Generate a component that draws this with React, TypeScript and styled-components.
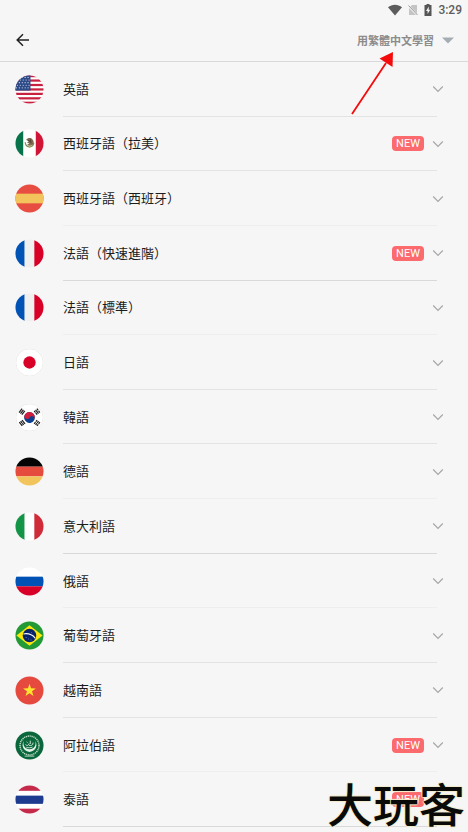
import React, { useState } from "react";
import styled, { createGlobalStyle } from "styled-components";

const GlobalStyle = createGlobalStyle`
  * { box-sizing: border-box; }
  body { margin: 0; background: #f6f6f6; }
  button, select { font: inherit; color: inherit; border: 0; padding: 0; margin: 0; background: none; }
`;

const Page = styled.div`
  position: relative;
  display: flex;
  flex-direction: column;
  min-height: 100vh;
  background: #f6f6f6;
  color: #1c1c1c;
  font-family: "Noto Sans CJK SC", "Noto Sans", sans-serif;
`;

const StatusBar = styled.div`
  display: flex;
  align-items: center;
  justify-content: flex-end;
  gap: 6px;
  height: 20px;
  padding-right: 6px;
  color: #5c5c5c;
  font: 500 12px/20px Roboto, sans-serif;
`;

const Header = styled.header`
  display: flex;
  align-items: center;
  justify-content: space-between;
  height: 42px;
  padding: 0 14px 1px 15px;
  border-bottom: 1px solid #d9d9dc;
`;

const BackButton = styled.button`
  display: flex;
  cursor: pointer;
`;

const LanguagePicker = styled.label`
  display: flex;
  align-items: center;
  gap: 8px;
`;

const LanguageSelect = styled.select`
  appearance: none;
  color: #8c8c8c;
  font-size: 11px;
  line-height: 16px;
  font-weight: 700;
  cursor: pointer;
`;

const List = styled.ul`
  flex: 1;
  display: grid;
  grid-auto-rows: 1fr;
  list-style: none;
  margin: 0;
  padding: 0 0 5px;
`;

const Item = styled.li`
  display: flex;
  min-height: 48px;
`;

const Row = styled.button`
  flex: 1;
  display: flex;
  padding: 0 31px 0 15px;
  text-align: left;
  cursor: pointer;
`;

const FlagCell = styled.span`
  display: flex;
  align-items: center;
  align-self: stretch;
  width: 48px;
`;

type Tone = "faint" | "soft" | "strong";
const tones: Record<Tone, string> = { faint: "#eeeeee", soft: "#e3e3e3", strong: "#d9d9d9" };

const RowBody = styled.span<{ $tone: Tone }>`
  flex: 1;
  align-self: stretch;
  display: flex;
  align-items: center;
  padding-top: 1px;
  border-bottom: 1px solid ${(p) => tones[p.$tone]};
`;

const Name = styled.span`
  flex: 1;
  padding-bottom: 1px;
  font-size: 13px;
  line-height: 20px;
`;

const Badge = styled.span`
  width: 32px;
  height: 15px;
  border-radius: 4px;
  background: #fb6a6c;
  color: #fff;
  font: 400 11px/16px Roboto, sans-serif;
  text-align: center;
`;

const Chevron = styled.svg<{ $open: boolean }>`
  width: 12px;
  height: 8px;
  margin: 0 -7px 0 8px;
  transform: ${(p) => (p.$open ? "rotate(180deg)" : "none")};
`;

const Pointer = styled.svg`
  position: absolute;
  top: 50px;
  right: 72px;
  pointer-events: none;
`;

const Watermark = styled.div`
  position: absolute;
  right: 3px;
  bottom: 4px;
  color: #0a0a08;
  font-size: 46px;
  line-height: 52px;
  font-weight: 500;
  text-shadow: 1px 0 1px #f3eccb, -1px 0 1px #f3eccb, 0 1px 1px #f3eccb, 0 -1px 1px #f3eccb;
  pointer-events: none;
`;

const star = (cx: number, cy: number, r: number) =>
  Array.from({ length: 10 }, (_, i) => {
    const a = (i * Math.PI) / 5 - Math.PI / 2;
    const q = i % 2 ? r * 0.39 : r;
    return `${cx + q * Math.cos(a)},${cy + q * Math.sin(a)}`;
  }).join(" ");

const Tricolor = ({ colors, vertical }: { colors: string[]; vertical?: boolean }) => (
  <>
    {colors.map((c, i) =>
      vertical ? (
        <rect key={i} x={i * 10} width="10" height="30" fill={c} />
      ) : (
        <rect key={i} y={i * 10} width="30" height="10" fill={c} />
      )
    )}
  </>
);

const Trigram = ({ x, y, angle, broken }: { x: number; y: number; angle: number; broken: number[] }) => (
  <g transform={`translate(${x} ${y}) rotate(${angle})`} stroke="#222" strokeWidth="1.3">
    {[-1.8, 0, 1.8].map((o, i) => (
      <path key={i} d={broken[i] ? `M-2.5 ${o}h2.2M.3 ${o}h2.2` : `M-2.5 ${o}h5`} />
    ))}
  </g>
);

const flags: Record<string, React.ReactNode> = {
  us: (
    <>
      <rect width="30" height="30" fill="#fff" />
      {[0, 4.6, 9.2, 13.8, 18.4, 23, 27.6].map((y) => (
        <rect key={y} y={y} width="30" height="2.3" fill="#c8203f" />
      ))}
      <rect width="16" height="16.1" fill="#2b4a87" />
      {[2.5, 5.2, 7.9, 10.6, 13.3].map((y, r) =>
        [1.5, 4.5, 7.5, 10.5, 13.5].map((x) => (
          <circle key={`${x}-${y}`} cx={x + (r % 2 ? 1 : 0)} cy={y} r=".6" fill="#dce5f4" />
        ))
      )}
    </>
  ),
  mx: (
    <>
      <rect width="30" height="30" fill="#fff" />
      <rect width="8.5" height="30" fill="#08734b" />
      <rect x="21.5" width="8.5" height="30" fill="#d11536" />
      <path d="M10.6 13.8c.2 6 8.2 6.200 8.800.4" fill="none" stroke="#718d58" strokeWidth="1.3" />
      <path d="M11.5 11.200c1.800-2.400 5-2.200 6.600-.4 1.700 1.700 1.600 4.200 0 5.800-2 1.100-4.400.8-5.500-.6l2.300-.7-2.700-1.700 2.300-.5z" fill="#82694e" />
      <path d="M13.500 12l2 .7 1.400 2M16 10.800l.3 2.300" fill="none" stroke="#423b32" strokeWidth=".9" />
      <circle cx="15.1" cy="18.4" r="1.1" fill="#c4a95f" />
    </>
  ),
  es: (
    <>
      <rect width="30" height="30" fill="#e84d42" />
      <rect y="10" width="30" height="10" fill="#f3c45b" />
    </>
  ),
  fr: <Tricolor vertical colors={["#0052b4", "#f0f0f0", "#d80027"]} />,
  jp: (
    <>
      <rect width="30" height="30" fill="#fff" />
      <circle cx="15" cy="15" r="6.4" fill="#d80027" />
      <circle cx="15" cy="15" r="14.2" fill="none" stroke="#e4e4e4" strokeWidth=".8" />
    </>
  ),
  kr: (
    <>
      <rect width="30" height="30" fill="#fff" />
      <g transform="rotate(28 15 15)">
        <circle cx="15" cy="15" r="5.6" fill="#0d3f8c" />
        <path d="M9.400 15a5.600 5.600 0 0 1 11.200 0 2.800 2.800 0 0 0-5.600 0 2.800 2.800 0 0 1-5.600 0z" fill="#d31e3b" />
      </g>
      <Trigram x={7.2} y={9} angle={-52} broken={[0, 0, 0]} />
      <Trigram x={22.8} y={9} angle={52} broken={[1, 0, 1]} />
      <Trigram x={7.4} y={20.7} angle={52} broken={[0, 1, 0]} />
      <Trigram x={22.8} y={20.7} angle={-52} broken={[1, 1, 1]} />
      <circle cx="15" cy="15" r="14.2" fill="none" stroke="#e4e4e4" strokeWidth=".8" />
    </>
  ),
  de: <Tricolor colors={["#050505", "#e64c3d", "#f2c55c"]} />,
  it: <Tricolor vertical colors={["#149447", "#ffffff", "#cf2b39"]} />,
  ru: <Tricolor colors={["#ffffff", "#0052b4", "#d80027"]} />,
  br: (
    <>
      <rect width="30" height="30" fill="#229a35" />
      <path d="M15 4.500L28.500 15 15 25.500 1.500 15z" fill="#fee80a" />
      <circle cx="15" cy="15" r="7" fill="#08246b" />
      <path d="M8.600 13.400c4.700-.9 9.200.6 12.300 4.200" fill="none" stroke="#f4f7f8" strokeWidth="1.2" />
      <g fill="#bdc9e4">
        <circle cx="11.5" cy="17" r=".5" />
        <circle cx="14" cy="18.5" r=".5" />
        <circle cx="16.5" cy="19.6" r=".5" />
        <circle cx="17" cy="12" r=".4" />
      </g>
    </>
  ),
  vn: (
    <>
      <rect width="30" height="30" fill="#e64a3f" />
      <polygon points={star(15, 15, 7)} fill="#ffe32c" />
    </>
  ),
  ar: (
    <>
      <rect width="30" height="30" fill="#09673b" />
      <circle cx="15" cy="15" r="9.8" fill="none" stroke="#c3dccb" strokeWidth="1.5" strokeDasharray="1.3 .7" />
      <path d="M9.300 10a7.200 7.200 0 1 0 11.400 0 6.300 6.300 0 1 1-11.400 0z" fill="#e4f0e8" />
      <path d="M10.800 14c1.600 1.600 3.300 1.100 3.700-1.100M14.500 14.800c2.200.7 4.200-.2 4.200-2.800M12 11.200l1 .8M15.800 10v3.500M11.700 16.800c2 .8 4.600.8 6.400-.2" fill="none" stroke="#e4f0e8" strokeWidth=".9" />
      <path d="M10 26h10" stroke="#b9d5c3" strokeWidth="1" />
    </>
  ),
  th: (
    <>
      <rect width="30" height="30" fill="#fff" />
      <rect width="30" height="6" fill="#c52a4b" />
      <rect y="11" width="30" height="8.5" fill="#1d3c8f" />
      <rect y="24.5" width="30" height="5.5" fill="#c52a4b" />
    </>
  ),
};

const Flag = ({ id, code }: { id: string; code: string }) => (
  <svg width="29" height="29" viewBox="0 0 30 30" aria-hidden="true">
    <clipPath id={id}>
      <circle cx="15" cy="15" r="14.5" />
    </clipPath>
    <g clipPath={`url(#${id})`}>{flags[code]}</g>
  </svg>
);

const languages: { name: string; flag: string; tone: Tone; isNew?: boolean }[] = [
  { name: "英語", flag: "us", tone: "soft" },
  { name: "西班牙語（拉美）", flag: "mx", tone: "soft", isNew: true },
  { name: "西班牙語（西班牙）", flag: "es", tone: "faint" },
  { name: "法語（快速進階）", flag: "fr", tone: "strong", isNew: true },
  { name: "法語（標準）", flag: "fr", tone: "faint" },
  { name: "日語", flag: "jp", tone: "soft" },
  { name: "韓語", flag: "kr", tone: "soft" },
  { name: "德語", flag: "de", tone: "faint" },
  { name: "意大利語", flag: "it", tone: "strong" },
  { name: "俄語", flag: "ru", tone: "faint" },
  { name: "葡萄牙語", flag: "br", tone: "soft" },
  { name: "越南語", flag: "vn", tone: "soft" },
  { name: "阿拉伯語", flag: "ar", tone: "faint", isNew: true },
  { name: "泰語", flag: "th", tone: "strong", isNew: true },
];

export default function App() {
  const [open, setOpen] = useState<string | null>(null);
  return (
    <Page>
      <GlobalStyle />
      <StatusBar>
        <svg width="14" height="12" viewBox="0 0 14 12" aria-hidden="true">
          <path d="M0 3.300C4-.1 10-.1 14 3.300L7 11.500z" fill="#5c5c5c" />
        </svg>
        <svg width="10" height="12" viewBox="0 0 10 12" aria-hidden="true">
          <path d="M4 1h5v8.500L2.500 2.500z" fill="#c4c4c4" />
          <path d="M1 4v7h7z" fill="#c4c4c4" />
          <path d="M.5 1.500l9 9.500" stroke="#8e8e8e" strokeWidth=".9" />
        </svg>
        <svg width="8" height="12" viewBox="0 0 8 12" aria-hidden="true">
          <path d="M2.500 0h3v1H7.500v11H.5V1h2z" fill="#555" />
          <path d="M4.800 2.500L2 7h1.600v3L6.200 5.800H4.700z" fill="#f5f5f5" />
        </svg>
        <span>3:29</span>
      </StatusBar>
      <Header>
        <BackButton aria-label="返回">
          <svg width="15" height="14" viewBox="0 0 15 14" fill="none" stroke="#222" strokeWidth="1.5" aria-hidden="true">
            <path d="M14 7H2.500M8 1.200L2.200 7 8 12.800" />
          </svg>
        </BackButton>
        <LanguagePicker>
          <LanguageSelect aria-label="學習語言">
            <option>用繁體中文學習</option>
          </LanguageSelect>
          <svg width="12" height="7" viewBox="0 0 12 7" aria-hidden="true">
            <path d="M0 .5h12L6 6.500z" fill="#a5adb3" />
          </svg>
        </LanguagePicker>
      </Header>
      <List>
        {languages.map((l, i) => (
          <Item key={l.name}>
            <Row aria-expanded={open === l.name} onClick={() => setOpen(open === l.name ? null : l.name)}>
              <FlagCell>
                <Flag id={`flag-${i}`} code={l.flag} />
              </FlagCell>
              <RowBody $tone={l.tone}>
                <Name>{l.name}</Name>
                {l.isNew && <Badge>NEW</Badge>}
                <Chevron $open={open === l.name} viewBox="0 0 12 8" aria-hidden="true">
                  <path d="M1.200 1.500L6 6.300l4.800-4.800" fill="none" stroke="#a6a6a6" strokeWidth="1.2" />
                </Chevron>
              </RowBody>
            </Row>
          </Item>
        ))}
      </List>
      <Pointer width="46" height="66" viewBox="0 0 46 66" aria-hidden="true">
        <path d="M2 64L36 13" stroke="#f40c0c" strokeWidth="1.8" />
        <path d="M43 2L29.500 8.500 42.500 17z" fill="#f40c0c" />
      </Pointer>
      <Watermark>大玩客</Watermark>
    </Page>
  );
}
